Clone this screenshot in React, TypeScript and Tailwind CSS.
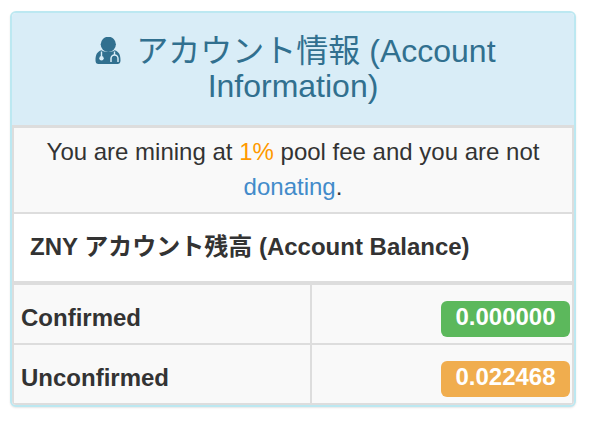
const font = "[font-family:'Liberation_Sans','Noto_Sans_CJK_JP',sans-serif]";

function DoctorIcon() {
  return (
    <svg viewBox="0 0 26 28" className="inline-block w-[26px] h-[28px] align-[-3px] ml-[5px] mr-[6px]">
      <circle cx="13.3" cy="7.3" r="7.6" fill="#31708f" />
      <path
        d="M0.5 23.5C0.5 18 1.8 14.6 6.5 13.2C9 15.6 17.5 15.6 19.5 13.2C24.2 14.6 25.5 18 25.5 23.5C25.5 26 24.3 27 22.5 27L3.5 27C1.7 27 0.5 26 0.5 23.5Z"
        fill="#31708f"
      />
      <path d="M6.5 14.5V19.5" stroke="#d9edf7" strokeWidth="1.4" fill="none" />
      <circle cx="6.5" cy="21.3" r="2.2" fill="#d9edf7" />
      <path d="M19.5 14.5V18" stroke="#d9edf7" strokeWidth="1.4" fill="none" />
      <path d="M16 25V21.5a3.5 3.5 0 0 1 7 0V25" stroke="#d9edf7" strokeWidth="1.5" fill="none" />
    </svg>
  );
}

export default function App() {
  return (
    <div className={`${font} bg-white h-[425px] pl-[10px] pt-[11px] text-[#333]`}>
      <div className="w-[566px] h-[396px] flex flex-col overflow-hidden rounded-[6px] border-2 border-[#bce8f1] bg-white shadow-[0_1px_2px_rgba(0,0,0,0.1)]">
        <div className="h-[112px] shrink-0 bg-[#d9edf7] text-[#31708f] text-center text-[32px] leading-[35px] pt-[21px] px-[20px]">
          <DoctorIcon /> アカウント情報 (Account Information)
        </div>
        <div className="flex-1 flex flex-col border-x-2 border-t-[3px] border-b-[2px] border-[#ddd]">
          <div className="h-[84px] shrink-0 bg-[#f9f9f9] text-center text-[24px] leading-[35px] pt-[6px] px-[20px]">
            You are mining at <span className="text-[#f90]">1%</span> pool fee and you are not <span className="text-[#428bca]">donating</span>.
          </div>
          <div className="h-[69px] shrink-0 border-t-2 border-[#ddd] bg-white font-bold text-[24px] leading-[26px] pt-[20px] pl-[16px]">
            ZNY アカウント残高 (Account Balance)
          </div>
          <div className="flex-1 grid grid-cols-[298px_1fr] grid-rows-[60px_1fr] border-t-[4px] border-[#ddd] bg-[#f9f9f9] font-bold text-[24px] leading-[27px]">
            <div className="border-r-2 border-b-2 border-[#ddd] pl-[7px] pt-[19px]">Confirmed</div>
            <div className="border-b-2 border-[#ddd] flex items-start justify-end pr-[2px] pt-[16px]">
              <span className="w-[129px] h-[36px] rounded-[6px] bg-[#5cb85c] text-white text-center leading-[32px]">0.000000</span>
            </div>
            <div className="border-r-2 border-[#ddd] pl-[7px] pt-[19px]">Unconfirmed</div>
            <div className="flex items-start justify-end pr-[2px] pt-[16px]">
              <span className="w-[129px] h-[36px] rounded-[6px] bg-[#f0ad4e] text-white text-center leading-[32px]">0.022468</span>
            </div>
          </div>
        </div>
      </div>
    </div>
  );
}
